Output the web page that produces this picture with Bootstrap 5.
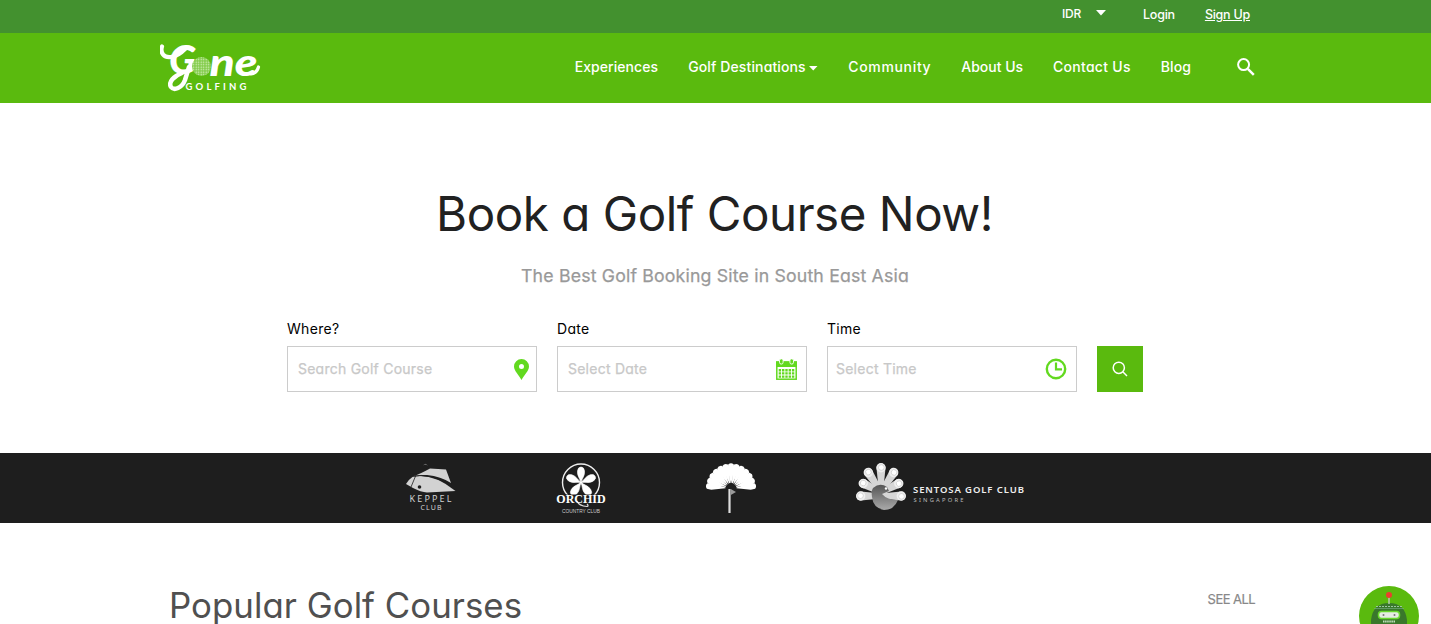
<!DOCTYPE html>
<html lang="en">
<head>
<meta charset="utf-8">
<meta name="viewport" content="width=device-width, initial-scale=1">
<title>Gone Golfing</title>
<link href="https://cdn.jsdelivr.net/npm/bootstrap@5.3.0/dist/css/bootstrap.min.css" rel="stylesheet">
<style>
body{font-family:Inter,sans-serif;font-feature-settings:"cv11","ss03";font-size:14px;line-height:20px;color:#000;background:#fff;overflow:hidden}
svg{display:block;flex:none}
a{color:inherit;text-decoration:none;white-space:nowrap}
.wrap{width:1111px;margin:0 auto}
.topbar{height:33px;background:#43912f;color:#fff;font-size:12.5px;font-weight:500;letter-spacing:-.24px}
.topbar .wrap{padding:5px 21px 0 0}
.currency{font-size:12px;line-height:18px}
.mainbar{height:70px;background:#5aba0e;color:#fff;font-weight:500}
.mainbar .wrap{padding-bottom:2px}
.menu{gap:30px;margin-right:46px}
.menu a{letter-spacing:var(--ls,0)}
.hero{height:350px;padding-top:81px}
.hero h1{font-size:47.5px;line-height:60px;font-weight:400;letter-spacing:-.46px;color:#212121;margin:0 2px 0 0}
.hero p{font-size:17.7px;line-height:26px;letter-spacing:.18px;color:#999;margin:19px 1px 0 0;-webkit-text-stroke:.25px #999}
.search-form{width:857px;margin:30px auto 0;gap:20px}
.search-form label{display:block;line-height:20px;margin-bottom:7px;letter-spacing:.3px}
.field-box{width:250px;height:46px;border:1px solid #ccc;padding:0 9px 0 10px;color:#c8c8c8;letter-spacing:.24px;-webkit-text-stroke:.25px #c8c8c8}
.btn-search{width:46px;height:46px;border:0;border-radius:0;background:#5aba0e}
.partners{height:70px;background:#1e1e1e;gap:100px;padding-right:1px}
.popular{padding:61px 16px 0 9px}
.popular h2{font-size:34.8px;line-height:42px;font-weight:400;letter-spacing:.04px;color:#505050;margin:0}
.popular a{font-size:13px;letter-spacing:-.56px;color:#888;margin-top:5px;-webkit-text-stroke:.2px #888}
.chat-bot{width:60px;height:60px;right:12px;bottom:-22px;background:#5aba0e}
</style>
</head>
<body>
<header>
  <div class="topbar">
    <div class="wrap d-flex justify-content-end h-100">
      <a href="#" class="currency d-flex">IDR
        <svg width="10" height="6" style="margin:5px 0 0 15px"><path d="M0 0h10L5 5.5z" fill="#fff"/></svg></a>
      <a href="#" style="margin-left:37px">Login</a>
      <a href="#" class="text-decoration-underline" style="margin-left:30px">Sign Up</a>
    </div>
  </div>
  <nav class="mainbar">
    <div class="wrap d-flex align-items-center h-100">
      <a href="#" class="me-auto" aria-label="Gone Golfing">
        <svg width="102" height="52" viewBox="0 0 102 52" fill="#fff">
          <path d="M2 5.500C0 12 4 17 11 16C19 15 23 10 26 7" fill="none" stroke="#fff" stroke-width="4.200" stroke-linecap="round"/>
          <path d="M29 26L25 39C22 47 14 50 11 46C8 41 14 35 22 32" fill="none" stroke="#fff" stroke-width="4.500" stroke-linecap="round"/>
          <g font-family="Lato" font-weight="900" font-style="italic">
            <text x="9" y="32.500" font-size="40" textLength="27" lengthAdjust="spacingAndGlyphs">G</text>
            <text x="49.500" y="34.500" font-size="38" textLength="48" lengthAdjust="spacingAndGlyphs">ne</text>
          </g>
          <path d="M91 33Q97 32 98.500 26" fill="none" stroke="#fff" stroke-width="3.200" stroke-linecap="round"/>
          <defs><pattern id="dimples" width="2.500" height="2.500" patternUnits="userSpaceOnUse"><circle cx="1.200" cy="1.200" r=".7" fill="#d9f2c4"/></pattern></defs>
          <circle cx="41.500" cy="25.500" r="9.500" fill="#82cb4a"/><circle cx="41.500" cy="25.500" r="9.500" fill="url(#dimples)"/>
          <text x="25.500" y="48.500" font-family="Lato" font-size="9.500" font-weight="700" textLength="61">GOLFING</text>
        </svg>
      </a>
      <div class="menu d-flex">
        <a href="#" style="--ls:.07px">Experiences</a>
        <a href="#" class="d-flex align-items-center" style="--ls:.13px">Golf Destinations<svg width="9" height="5" style="margin:2px 0 0 3.500px"><path d="M0 0h8.500L4.250 4.500z" fill="#fff"/></svg></a>
        <a href="#" style="--ls:.66px">Community</a>
        <a href="#" style="--ls:-.02px">About Us</a>
        <a href="#" style="--ls:.28px">Contact Us</a>
        <a href="#" style="--ls:.1px">Blog</a>
      </div>
      <a href="#" aria-label="Search" style="margin-right:16px">
        <svg width="18" height="18" viewBox="0 0 18 18" fill="none" stroke="#fff" stroke-width="2"><circle cx="6.600" cy="6.600" r="5.500"/><path d="M10.800 10.800L16.800 16.800" stroke-width="2.500"/></svg>
      </a>
    </div>
  </nav>
</header>
<main>
  <section class="hero text-center">
    <h1>Book a Golf Course Now!</h1>
    <p>The Best Golf Booking Site in South East Asia</p>
    <form class="search-form d-flex align-items-end text-start">
      <div>
        <label>Where?</label>
        <div class="field-box d-flex align-items-center justify-content-between" style="padding-right:7px"><span>Search Golf Course</span>
          <svg width="15" height="21" viewBox="0 0 15 21"><path fill-rule="evenodd" d="M7.500 0A7.500 7.500 0 0 0 0 7.500C0 12 5 16 7.500 21C10 16 15 12 15 7.500A7.500 7.500 0 0 0 7.500 0ZM7.500 5A2.500 2.500 0 1 1 7.500 10A2.500 2.500 0 0 1 7.500 5Z" fill="#62d91f"/></svg></div>
      </div>
      <div>
        <label>Date</label>
        <div class="field-box d-flex align-items-center justify-content-between"><span>Select Date</span>
          <svg width="21" height="21" viewBox="0 0 21 21"><rect x=".8" y="3" width="19.400" height="17.200" fill="#fff" stroke="#62d91f" stroke-width="1.500"/><path d="M0 2.500h21V8H0z" fill="#62d91f"/><g fill="#62d91f" stroke="#fff" stroke-width=".9"><rect x="3.500" y="-.2" width="3.600" height="5.300" rx="1.800"/><rect x="13.900" y="-.2" width="3.600" height="5.300" rx="1.800"/></g><path d="M2.700 11.200h15.600M2.700 14.400h15.600M2.700 17.600h15.600" stroke="#62d91f" stroke-width="2.400" stroke-dasharray="2.400 .9"/></svg></div>
      </div>
      <div>
        <label>Time</label>
        <div class="field-box d-flex align-items-center justify-content-between" style="padding-left:8px"><span>Select Time</span>
          <svg width="22" height="22" viewBox="0 0 22 22" fill="none" stroke="#62d91f" stroke-width="2.400"><circle cx="11" cy="11" r="9.200"/><path d="M11 4.500V11.300H17" stroke-width="2.200"/></svg></div>
      </div>
      <button type="button" class="btn btn-search d-flex align-items-center justify-content-center p-0" aria-label="Search">
        <svg width="16" height="16" viewBox="0 0 16 16" fill="none" stroke="#fff" stroke-width="1.500"><circle cx="6.800" cy="6.800" r="5.600"/><path d="M10.800 10.800L15 15"/></svg>
      </button>
    </form>
  </section>
  <section class="partners d-flex align-items-center justify-content-center">
    <svg width="50" height="50" viewBox="0 0 50 50" fill="#d2d2d2">
      <path d="M17 2.200L19.500 .8L22 2.400L19.500 1.800z" fill="#777"/>
      <path d="M8 13Q14 11 24 5.500L40 6.500L45 20Q35 13.500 21 12Q14 11.500 8 13z"/>
      <path d="M7 13.500Q28 10 49.500 28L21 29.500Q15 29 7 25L0 21Q2 17 7 13.500z"/>
      <path d="M5 13.500Q26 9 47 24M10 12L5 24" fill="none" stroke="#1e1e1e" stroke-width=".8"/>
      <circle cx="13.500" cy="24" r="1.800" fill="#1e1e1e"/>
      <g font-family="Noto Sans"><text x="3.500" y="39" font-size="9" textLength="42">KEPPEL</text><text x="14.500" y="47" font-size="7" textLength="21">CLUB</text></g>
    </svg>
    <svg width="50" height="50" viewBox="0 0 50 50" fill="#fff" overflow="visible">
      <circle cx="25" cy="19.500" r="18.500" fill="none" stroke="#eee" stroke-width="1.400"/>
      <g><path id="petal" d="M25 20C24 15 21 13 21.500 8Q22 4 25 4Q28 4 28.500 8C29 13 26 15 25 20z" stroke="#fff" stroke-width=".6"/>
      <use href="#petal" transform="rotate(67 25 19.500)"/><use href="#petal" transform="rotate(-67 25 19.500)"/><use href="#petal" transform="rotate(143 25 19.500)"/><use href="#petal" transform="rotate(-143 25 19.500)"/></g>
      <path d="M0 31.500h50v10H0z" fill="#1e1e1e"/>
      <path d="M21 38Q23 43 31 43.500Q33 43 31 41" fill="none" stroke="#ddd" stroke-width="1.200"/>
      <text x=".3" y="40" font-family="Liberation Serif" font-weight="700" font-size="13" textLength="49.400" lengthAdjust="spacingAndGlyphs">ORCHID</text>
      <text x="6" y="49.500" font-family="Liberation Sans" font-size="5.300" fill="#ccc" textLength="38" lengthAdjust="spacingAndGlyphs">COUNTRY CLUB</text>
    </svg>
    <svg width="50" height="50" viewBox="0 0 50 50" fill="#fff">
      <g id="leaves"></g>
      <path d="M23.500 26V50" stroke="#ddd" stroke-width="2.200"/><path d="M24.800 26L30 29L24.800 32z" fill="#999"/>
    </svg>
    <svg width="169" height="50" viewBox="0 0 169 50">
      <defs><linearGradient id="bird" x1="0" y1="0" x2="0" y2="1"><stop offset="0" stop-color="#555"/><stop offset="1" stop-color="#aaa"/></linearGradient>
      <g id="feather"><path d="M23 30L20.500 5A4.500 4.500 0 0 1 29.500 5L27 30z" fill="#d6d6d6"/><circle cx="25" cy="4.700" r="4.700" fill="#eee"/><circle cx="25.300" cy="4.500" r="2.800" fill="#fff" stroke="#bbb" stroke-width=".5"/></g></defs>
      <g><use href="#feather"/><use href="#feather" transform="translate(0 1) rotate(33 25 28)"/><use href="#feather" transform="translate(0 1) rotate(-33 25 28)"/><use href="#feather" transform="translate(-3 3) rotate(63 25 28)"/><use href="#feather" transform="translate(3 3) rotate(-63 25 28)"/><use href="#feather" transform="translate(-3 5) rotate(90 25 28)"/><use href="#feather" transform="translate(3 5) rotate(-90 25 28)"/></g>
      <path d="M17 25Q24 19 31 24L33 28L26 31Q31 37 42 37Q38 47 28 47Q17 45 16 34Q15 28 17 25z" fill="url(#bird)"/>
      <circle cx="30" cy="25.500" r="1.200" fill="#fff"/>
      <g fill="#eee" font-family="Noto Sans"><text x="57" y="30" font-size="9.500" font-weight="600" textLength="111">SENTOSA GOLF CLUB</text><text x="57.500" y="38.500" font-size="5.800" fill="#bbb" textLength="50">SINGAPORE</text></g>
    </svg>
  </section>
  <section class="popular wrap d-flex justify-content-between">
    <h2>Popular Golf Courses</h2>
    <a href="#">SEE ALL</a>
  </section>
</main>
<div class="chat-bot position-fixed rounded-circle overflow-hidden">
  <svg width="60" height="60" viewBox="0 0 60 60">
    <path d="M12 60V34Q14 17 30 17Q46 17 48 34V60z" fill="#39782b"/>
    <path d="M30 11v7" stroke="#b9cbb0" stroke-width="1.500"/><circle cx="30" cy="9" r="3" fill="#ea3f2f"/>
    <path d="M17 20.500H43" stroke="#9cc6a0" stroke-dasharray="2 1"/><path d="M15 22.500H45" stroke="#73a97c" stroke-width=".7"/>
    <rect x="19.500" y="25.500" width="21" height="7" rx="3" fill="#e5ece2" stroke="#69d82c" stroke-width="1.500"/>
    <circle cx="24.500" cy="29" r="1" fill="#777"/><circle cx="35.500" cy="29" r="1" fill="#777"/>
    <path d="M24 35.500h12" stroke="#c2dfc0" stroke-width="2" stroke-dasharray="1.500 .6"/>
  </svg>
</div>
<script src="https://cdn.jsdelivr.net/npm/bootstrap@5.3.0/dist/js/bootstrap.bundle.min.js"></script>
<script>
// Thirteen leaves spread over a half circle.
let leaves = '';
for (let i = 0; i < 13; i++) {
  const angle = -84 + i * 168 / 12;
  leaves += `<path d="M24.600 20L21.700 6L22.200 1.500Q25 -1 27.800 1.500L28.300 6L25.400 20z" transform="rotate(${angle} 25 25.500)"/>`;
}
document.getElementById('leaves').innerHTML = leaves;
</script>
</body>
</html>
